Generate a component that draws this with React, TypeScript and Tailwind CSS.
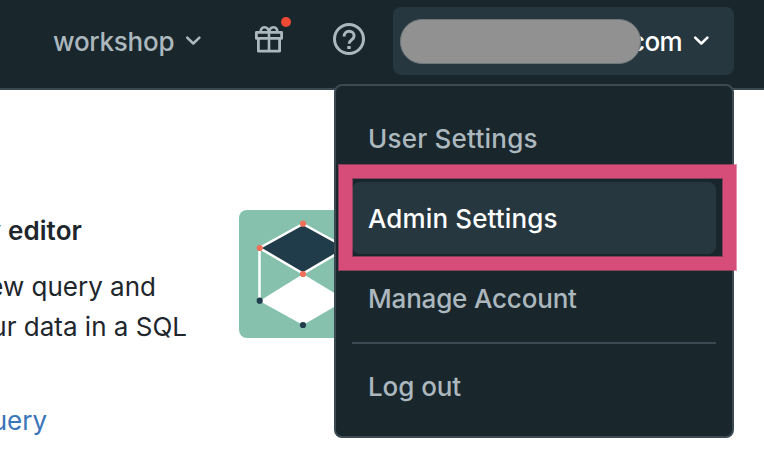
import React from "react";

function Chevron({ className }: { className: string }) {
  return (
    <svg className={className} width="17" height="12" viewBox="0 0 17 12" fill="none" stroke="currentColor" strokeWidth="2.600" strokeLinecap="round" strokeLinejoin="round">
      <path d="M2.200 2.600 8.300 8.500l6.100-5.900" />
    </svg>
  );
}

function GiftIcon() {
  return (
    <svg width="28" height="30" viewBox="0 0 28 30" fill="none" stroke="currentColor" strokeWidth="2.800" strokeLinejoin="round">
      <path d="M1.400 8.400h25.200v6H1.400zM3.400 14.400v12.800h21.200V14.400" />
      <path d="M14 8v19" strokeWidth="2.600" />
      <path d="M13.700 8.400C13.700 5 12 3.200 9.400 3.200S5.400 5.400 5.700 8.400M14.300 8.400C14.300 5 16 3.200 18.600 3.200s4 2.200 3.700 5.200" strokeWidth="2.600" />
    </svg>
  );
}

function HelpIcon() {
  return (
    <svg width="32" height="32" viewBox="0 0 32 32" fill="none" stroke="currentColor" strokeWidth="3">
      <circle cx="16" cy="16" r="14.500" />
      <path d="M11.100 13.500c0-3.200 2-5.200 5-5.200s5 2 5 4.700c0 3.700-5 4.100-5 7.700" />
      <path d="M14.300 23h3.400v3h-3.400z" fill="currentColor" stroke="none" />
    </svg>
  );
}

function CubeArt() {
  return (
    <svg width="128" height="128" viewBox="0 0 128 128" className="block shrink-0 rounded-lg bg-[#85c1ac]">
      <path d="M64 64 107 90 64 115 20.500 91z" fill="#fff" />
      <path d="M64 14 107.500 38 64 63.500 20.500 38z" fill="#203b49" stroke="#fff" strokeWidth="2.500" />
      <path d="M20.500 38v52" stroke="#fff" strokeWidth="2.500" />
      <g fill="#f1705a">
        <circle cx="64" cy="13.700" r="3.100" />
        <circle cx="20.700" cy="38" r="3.100" />
        <circle cx="64" cy="64" r="3.100" />
      </g>
      <g fill="#203b49">
        <circle cx="20.700" cy="90.700" r="3.100" />
        <circle cx="64" cy="115" r="3.100" />
      </g>
    </svg>
  );
}

const itemClass = "flex h-[72px] items-center rounded-lg pt-0.5 pl-4 text-[26px] leading-8 font-[450] whitespace-nowrap";

function AccountMenu() {
  return (
    <div className="absolute left-[334px] top-[84px] h-[354px] w-[400px] rounded-lg border-2 border-[#3b4a52] bg-[#19272d] px-4 pt-4 text-[#acb8be]">
      <div className={itemClass}>
        <span className="tracking-[0.220px]">User Settings</span>
      </div>
      <div className={itemClass + " mt-2 bg-[#263740] text-white"}>
        <span className="tracking-[0.120px]">Admin Settings</span>
      </div>
      <div className={itemClass + " mt-2"}>
        <span className="tracking-[-0.180px]">Manage Account</span>
      </div>
      <div className="mt-2 mb-1.5 h-0.5 bg-[#3b4a52]" />
      <div className={itemClass}>
        <span className="tracking-[-0.080px]">Log out</span>
      </div>
    </div>
  );
}

export default function App() {
  return (
    <div className="relative h-[458px] w-[764px] overflow-hidden bg-white font-['Inter','Liberation_Sans',sans-serif]">
      <header className="flex h-[90px] items-start border-b-2 border-[#3b4a52] bg-[#19272d] text-[#acb8be]">
        <div className="mt-[26px] ml-[53px] flex w-[202px] items-start text-[26px] leading-8 font-[450]">
          <span className="w-[132px] tracking-[-0.250px]">workshop</span>
          <Chevron className="mt-[9px]" />
        </div>
        <div className="relative mt-6 w-[78px]">
          <GiftIcon />
          <span className="absolute left-[26px] -top-[7px] size-2.5 rounded-full bg-[#ef4a34]" />
        </div>
        <div className="mt-[23px] w-[60px]">
          <HelpIcon />
        </div>
        <div className="mt-[7px] flex h-[68px] w-[341px] items-start rounded-lg bg-[#263740] pl-[7px] text-[26px] leading-8 font-[450] text-white">
          <span className="z-10 mt-3 h-[45px] w-[241px] shrink-0 rounded-[22px] border border-[#6f777a] bg-[#919191]" />
          <span className="mt-[19px] -ml-[11px] w-[63px] shrink-0 tracking-[-0.600px]">com</span>
          <Chevron className="mt-7" />
        </div>
      </header>
      <main className="flex">
        <section className="w-[239px] pt-[125px] text-[26px] leading-8 whitespace-nowrap text-[#20262c]">
          <h2 className="flex w-[82px] justify-end font-semibold tracking-[0.100px]">y editor</h2>
          <p className="mt-6 flex w-[156px] justify-end">new query and</p>
          <p className="mt-2 flex w-[187px] justify-end">your data in a SQL</p>
          <a className="mt-[62px] flex w-[47px] justify-end text-[#3974b9]">query</a>
        </section>
        <div className="pt-[120px]">
          <CubeArt />
        </div>
      </main>
      <AccountMenu />
      <div className="absolute left-[338px] top-[164px] h-[107px] w-[399px] border border-[#d64d79]/60">
        <div className="h-full border-[13px] border-[#d64d79]">
          <div className="h-full border border-[#d64d79]/60" />
        </div>
      </div>
    </div>
  );
}
